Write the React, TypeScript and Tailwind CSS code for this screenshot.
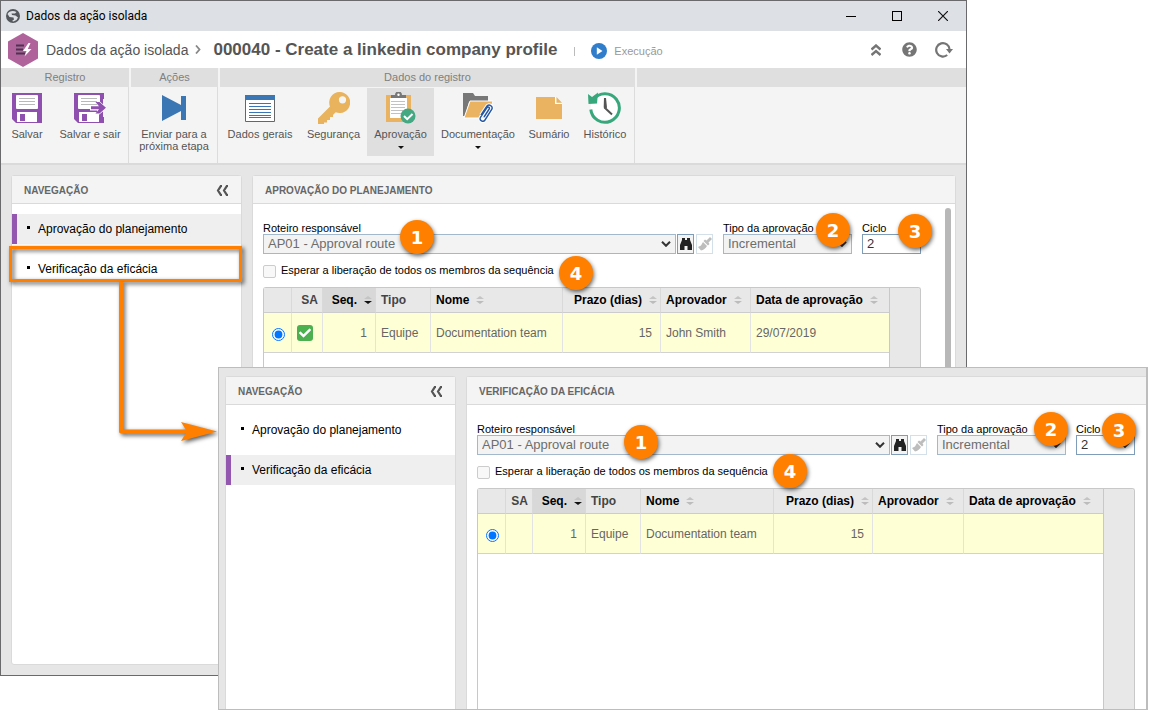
import type { ReactNode } from "react";
import clsx from "clsx";
import { FaCheck, FaQuestionCircle } from "react-icons/fa";

/* ---------- Icons ---------- */

const SaveShape = () => (
  <>
    <path d="M0 0h30v30H4l-4-4z" fill="#8e4fae" />
    <path d="M5 2h20a1 1 0 0 1 1 1v12a1 1 0 0 1-1 1H5a1 1 0 0 1-1-1V3a1 1 0 0 1 1-1z" fill="#fff" />
    <path d="M7 5.500h16M7 8.500h16M7 11.500h16" stroke="#b9b9b9" />
    <path d="M5 19h20v10H5z" fill="#fff" />
    <path d="M8 21h5v7H8z" fill="#8e4fae" />
  </>
);

const SaveIcon = () => (
  <svg width="30" height="30" viewBox="0 0 30 30">
    <SaveShape />
  </svg>
);

const SaveExitIcon = () => (
  <svg width="32" height="30" viewBox="0 0 32 30">
    <SaveShape />
    <path d="M29 6v18h3V6z" fill="#f4f4f4" />
    <path d="M16 12h7V6l10 8.800-10 8.700v-6h-7z" fill="#fff" />
    <path d="M17 13.300h8l-3.500-4.300h4l6.500 5.800-6.500 5.700h-4l3.500-4.200h-8z" fill="#8e4fae" />
  </svg>
);

const NextStepIcon = () => (
  <svg width="24" height="26" viewBox="0 0 24 26">
    <path d="M0 0l19 10V1h5v24h-5v-9L0 26z" fill="#3a76b4" />
  </svg>
);

const GeneralDataIcon = () => (
  <svg width="30" height="27" viewBox="0 0 30 27">
    <path d="M.5.5h29v26H.5z" fill="#fff" stroke="#666" />
    <path d="M0 0h30v5H0z" fill="#3a76b4" />
    <path d="M4 8.500h22M4 11.500h22M4 14.500h22M4 17.500h22M4 20.500h22M4 22.500h22" stroke="#3a76b4" />
  </svg>
);

const KeyIcon = () => (
  <svg width="32" height="32" viewBox="0 0 32 32">
    <path
      fillRule="evenodd"
      fill="#e9b25c"
      d="M21.500 0a10.500 10.500 0 1 1-3.800 20.200L15 23v2h-3v3H9v2.500H6V32H0v-5.500l12-12A10.500 10.500 0 0 1 21.500 0zm3 4.200a3.600 3.600 0 1 0 0 7.200 3.600 3.600 0 0 0 0-7.200z"
    />
  </svg>
);

const ApprovalIcon = () => (
  <svg width="30" height="32" viewBox="0 0 30 32">
    <path d="M0 3h25v27H0z" fill="#e9b361" />
    <path d="M4 6h17v20H4z" fill="#fff" />
    <path d="M5 9.500h14M5 12.500h14M5 15.500h14M5 18.500h12M5 21.500h10" stroke="#c2c2c2" />
    <path d="M5 6V3h4a3.500 3.500 0 0 1 7 0h4v3z" fill="#777" />
    <circle cx="12.500" cy="2.800" r="1.200" fill="#fff" />
    <circle cx="22" cy="24" r="7.500" fill="#44a882" />
    <path d="M18 24l3.200 3.200L26.500 22" stroke="#fff" strokeWidth="2" fill="none" />
  </svg>
);

const DocumentsIcon = () => (
  <svg width="31" height="30" viewBox="0 0 31 30">
    <path d="M0 0h10l2 3h13v6H6L2 23H0z" fill="#777" />
    <path d="M7 8h23l-5 17H1z" fill="#e9b361" stroke="#fff" />
    <path
      d="M18 22l6-9a3 3 0 0 1 5 3l-7 11a2.600 2.600 0 0 1-4.500-2.600l6.500-9.800a1.300 1.300 0 0 1 2.200 1.400L21 24"
      fill="none"
      stroke="#fff"
      strokeWidth="3.500"
    />
    <path
      d="M18 22l6-9a3 3 0 0 1 5 3l-7 11a2.600 2.600 0 0 1-4.500-2.600l6.500-9.800a1.300 1.300 0 0 1 2.200 1.400L21 24"
      fill="none"
      stroke="#2458a4"
      strokeWidth="1.400"
    />
  </svg>
);

const SummaryIcon = () => (
  <svg width="26" height="22" viewBox="0 0 26 22">
    <path d="M0 0h19v7h7v15H0zM20.500 0L26 5.700h-5.500z" fill="#e9b361" />
    <path d="M19.500 0v6.500H26" stroke="#fff" fill="none" />
  </svg>
);

const HistoryIcon = () => (
  <svg width="34" height="32" viewBox="0 0 34 32">
    <circle cx="17" cy="16" r="14.500" fill="#fff" />
    <path d="M5.500 7.500A14.300 14.300 0 1 1 2.800 17.500" fill="none" stroke="#38a77c" strokeWidth="3" />
    <path d="M0 2l4 3 6-4.500-1 11L.5 12z" fill="#38a77c" />
    <path d="M16 6h2l1 9.500-1.500 1.500-1.800-1.500z" fill="#555" />
    <path d="M16.500 15.500l7.500 7" stroke="#555" strokeWidth="2" />
  </svg>
);

const ModuleIcon = () => (
  <svg width="30" height="34" viewBox="0 0 30 34" className="shrink-0">
    <path d="M15 0l15 8.500v17L15 34 0 25.500v-17z" fill="#b0639b" />
    <path d="M8 12.500h8M8 16.500h7M8 20.500h9" stroke="#4b3450" strokeWidth="1.800" />
    <path d="M20.500 10l-5.500 8h3.500l-2 5.500 7-7.500h-3.700l2.700-6z" fill="#fff" />
  </svg>
);

const GlobeIcon = () => (
  <svg width="14" height="14" viewBox="0 0 14 14">
    <circle cx="7" cy="7" r="7" fill="#54575c" />
    <path
      d="M1.500 5C3 2 7 1 10.500 3L9 4.500 5.500 4.500 6 6l3.500.5L12 8.500 10.500 11l-3 1.500L6 12l2-1.500L7.500 8.500 3.500 8z"
      fill="#dde1e6"
    />
  </svg>
);

const ReloadIcon = () => (
  <svg width="18" height="16" viewBox="0 0 18 16" fill="none">
    <path d="M12.200 13A6.700 6.700 0 1 1 14.600 7.500" stroke="#757575" strokeWidth="2.200" />
    <path d="M11 7h7l-3.500 4.500z" fill="#757575" />
  </svg>
);

const ChevronsUpIcon = () => (
  <svg width="10" height="12" viewBox="0 0 10 12" fill="none" stroke="#757575" strokeWidth="2.400">
    <path d="M.5 5.500L5 1.500l4.500 4M.5 11L5 7l4.500 4" />
  </svg>
);

const ChevronsLeftIcon = () => (
  <svg width="13" height="11" viewBox="0 0 13 11" fill="none" stroke="#555" strokeWidth="2.200">
    <path d="M6 .8H5L2 5.500l3 4.700h1M12 .8h-1L8 5.500l3 4.700h1" />
  </svg>
);

const BinocularsIcon = () => (
  <svg width="12" height="12" viewBox="0 0 12 12" fill="#222">
    <path d="M2 0h3v2h2V0h3v2l2 5v5H7.500V8h-3v4H0V7l2-5z" />
  </svg>
);

const BrushIcon = () => (
  <svg width="14" height="14" viewBox="0 0 14 14" fill="#bdbdbd">
    <path d="M12 0l2 2-3.500 3.500 1 1.500-1.500 1.500L5.500 4 7 2.500 8.500 3.500z" />
    <path d="M5 5l4 4c-1.500 2.500-3.500 4-6 4.500L0 10l3-1.500z" />
  </svg>
);

const SortIcon = ({ active }: { active?: boolean }) => (
  <svg width="8" height="8" viewBox="0 0 8 8" className="shrink-0">
    <path d="M0 3L4 0l4 3z" fill="#c4c4c4" />
    <path d="M0 5h8L4 8z" fill={active ? "#111" : "#bcbcbc"} />
  </svg>
);

/* ---------- Ribbon ---------- */

interface RibbonItemProps {
  label: ReactNode;
  icon: ReactNode;
  width: string;
  active?: boolean;
  menu?: boolean;
}

const RibbonItem = ({ label, icon, width, active, menu }: RibbonItemProps) => (
  <button
    type="button"
    className={clsx("flex h-[68px] shrink-0 flex-col items-center pt-[3px]", width, active && "bg-[#dfdfdf]")}
  >
    <span className="flex h-[34px] items-center justify-center">{icon}</span>
    <span className="mt-[3px] text-[11px] leading-[12px] whitespace-nowrap text-[#555]">{label}</span>
    {menu && (
      <svg width="6" height="3" viewBox="0 0 6 3" className="mt-[6px]">
        <path d="M0 0h6L3 3z" fill="#111" />
      </svg>
    )}
  </button>
);

const RibbonGroup = ({ title, className, children }: { title: string; className: string; children: ReactNode }) => (
  <section className={clsx("flex shrink-0 flex-col", className)}>
    <h3 className="mr-[2px] h-[19px] bg-[#dfdfdf] text-center text-[11px] leading-[19px] text-[#808080]">{title}</h3>
    <div className="mr-[2px] flex flex-1 border-r border-[#dcdcdc] pt-px">{children}</div>
  </section>
);

/* ---------- Panels ---------- */

const NavPanel = ({ selected, className }: { selected: number; className?: string }) => {
  const items = ["Aprovação do planejamento", "Verificação da eficácia"];
  return (
    <nav className={clsx("flex w-[231px] shrink-0 flex-col rounded-t-[3px] border border-[#dadada] bg-white", className)}>
      <div className="flex h-[28px] items-center justify-between border-b border-[#dadada] bg-[#f4f4f4] pt-[2px] pr-[12px] pl-[12px]">
        <h2 className="text-[10px] font-bold text-[#666]">NAVEGAÇÃO</h2>
        <button type="button" aria-label="Recolher">
          <ChevronsLeftIcon />
        </button>
      </div>
      <ul className="flex flex-col gap-[10px] pt-[10px]">
        {items.map((item, i) => (
          <li key={item}>
            <a
              href="#"
              className={clsx(
                "flex h-[30px] items-center border-l-[5px] pl-[10px] text-[12px] text-black",
                i === selected ? "border-[#9457b0] bg-[#efefef]" : "border-transparent"
              )}
            >
              <span className="mr-[8px] mb-[3px] size-[3px] bg-black" />
              {item}
            </a>
          </li>
        ))}
      </ul>
    </nav>
  );
};

const Badge = ({ n, className }: { n: number; className: string }) => (
  <span
    className={clsx(
      "absolute z-10 flex size-[34px] items-center justify-center rounded-full bg-[#ff8000] font-['DejaVu_Sans',sans-serif] text-[18px] font-bold text-white shadow-[1px_2px_4px_rgba(0,0,0,0.6)]",
      className
    )}
  >
    {n}
  </span>
);

interface SelectFieldProps {
  id: string;
  label: string;
  value: string;
  disabled?: boolean;
  className?: string;
  children?: ReactNode;
}

const SelectField = ({ id, label, value, disabled, className, children }: SelectFieldProps) => (
  <div className={clsx("relative", className)}>
    <label htmlFor={id} className="block h-[12px] text-[11px] leading-[12px] whitespace-nowrap text-black">
      {label}
    </label>
    <div className="relative">
      <select
        id={id}
        disabled={disabled}
        className={clsx(
          "block h-[20px] w-full appearance-none border pl-[4px] text-[13px] leading-[18px] opacity-100",
          disabled ? "border-[#a4b8cc] bg-[#f3f3f3] text-[#6d6d6d]" : "border-[#7f9db9] bg-white text-[#333]"
        )}
      >
        <option>{value}</option>
      </select>
      <svg width="10" height="6" viewBox="0 0 10 6" className="pointer-events-none absolute top-[7px] right-[5px]">
        <path d="M1 .8L5 4.800l4-4" fill="none" stroke="#333" strokeWidth="2" />
      </svg>
    </div>
    {children}
  </div>
);

interface Row {
  approved: boolean;
  seq: number;
  type: string;
  name: string;
  term: number;
  approver: string;
  date: string;
}

interface Column {
  label: string;
  width: string;
  sort?: "idle" | "active";
  right?: boolean;
  center?: boolean;
}

interface ApprovalPanelProps {
  id: string;
  title: string;
  row: Row;
  columns: Column[];
  badges: string[];
  scroll?: boolean;
  className?: string;
}

const ApprovalPanel = ({ id, title, row, columns, badges, scroll, className }: ApprovalPanelProps) => {
  const cell = "h-[40px] border-r border-b border-r-[#e3e3e3] border-b-[#d2d2d2] p-0 pl-[5px] whitespace-nowrap";
  return (
    <section className={clsx("flex min-w-0 flex-1 flex-col rounded-t-[3px] border border-[#dadada] bg-white", className)}>
      <h2 className="flex h-[28px] shrink-0 items-center border-b border-[#dadada] bg-[#f4f4f4] pt-[2px] pl-[12px] text-[10px] font-bold text-[#666]">
        {title}
      </h2>
      <div className="flex min-h-0 flex-1">
        <form className={clsx("flex min-w-0 flex-1 flex-col pt-[18px] pl-[10px]", scroll ? "pr-[24px]" : "pr-[11px]")}>
          <div className="flex items-end">
            <SelectField id={`${id}-route`} label="Roteiro responsável" value="AP01 - Approval route" disabled className="flex-1">
              <Badge n={1} className={badges[0]} />
            </SelectField>
            <button
              type="button"
              aria-label="Pesquisar"
              className="ml-px flex h-[20px] w-[17px] items-center justify-center border border-[#7f9db9] bg-[#f3f3f3]"
            >
              <BinocularsIcon />
            </button>
            <button
              type="button"
              aria-label="Limpar"
              className="mr-[10px] ml-[2px] flex h-[20px] w-[17px] items-center justify-center border border-[#d3dfe9]"
            >
              <BrushIcon />
            </button>
            <SelectField id={`${id}-type`} label="Tipo da aprovação" value="Incremental" disabled className="w-[129px]">
              <Badge n={2} className={badges[1]} />
            </SelectField>
            <SelectField id={`${id}-cycle`} label="Ciclo" value="2" className="ml-[10px] w-[59px]">
              <Badge n={3} className={badges[2]} />
            </SelectField>
          </div>

          <div className="relative mt-[11px] flex h-[13px] items-center">
            <input
              id={`${id}-wait`}
              type="checkbox"
              disabled
              className="size-[13px] appearance-none rounded-[2px] border border-[#ccc] bg-[#f8f8f8]"
            />
            <label htmlFor={`${id}-wait`} className="pb-[2px] pl-[5px] text-[11px] leading-[13px] text-black">
              Esperar a liberação de todos os membros da sequência
            </label>
            <Badge n={4} className={badges[3]} />
          </div>

          <div className="mt-[9px] flex min-h-0 flex-1 rounded-t-[3px] border border-b-0 border-[#c8c8c8]">
            <div className="min-w-0 flex-1">
              <table className="w-full table-fixed border-separate border-spacing-0 text-[12px] leading-[16px]">
                <thead>
                  <tr>
                    {columns.map((col, i) => (
                      <th
                        key={i}
                        className={clsx(
                          "h-[25px] border-b border-b-[#cccccc] p-0 whitespace-nowrap",
                          i < columns.length - 1 && "border-r border-r-[#d9d9d9]",
                          col.width,
                          col.sort === "active" ? "bg-[#d8d8d8]" : "bg-[#e8e8e8]",
                          col.sort ? "text-black" : "text-[#444]"
                        )}
                      >
                        <span
                          className={clsx(
                            "flex items-center gap-[7px]",
                            col.right && "justify-end pr-[3px]",
                            col.center && "justify-end pr-[4px]",
                            !col.right && !col.center && "pl-[5px]"
                          )}
                        >
                          {col.label}
                          {col.sort && <SortIcon active={col.sort === "active"} />}
                        </span>
                      </th>
                    ))}
                  </tr>
                </thead>
                <tbody>
                  <tr className="bg-[#ffffd5] text-[#666]">
                    <td className="h-[40px] border-r border-b border-r-[#e3e3e3] border-b-[#d2d2d2] p-0 pl-[8px]">
                      <input
                        type="radio"
                        name={`${id}-row`}
                        aria-label={row.name}
                        defaultChecked
                        className="mt-[3px] block size-[13px]"
                      />
                    </td>
                    <td className={cell}>
                      {row.approved && (
                        <span className="flex size-[16px] items-center justify-center rounded-[3px] bg-[#4caf50] text-white">
                          <FaCheck size={12} />
                        </span>
                      )}
                    </td>
                    <td className={clsx(cell, "pr-[8px] text-right")}>{row.seq}</td>
                    <td className={cell}>{row.type}</td>
                    <td className={cell}>{row.name}</td>
                    <td className={clsx(cell, "pr-[8px] text-right")}>{row.term}</td>
                    <td className={cell}>{row.approver}</td>
                    <td className="h-[40px] border-b border-[#d2d2d2] p-0 pl-[5px] whitespace-nowrap">{row.date}</td>
                  </tr>
                </tbody>
              </table>
            </div>
            <div className="w-[31px] shrink-0 rounded-tr-[2px] border-l border-[#c8c8c8] bg-[#e8e8e8]" />
          </div>
        </form>
        {scroll && <div className="mt-[4px] mr-[4px] w-[6px] shrink-0 rounded-full bg-[#b8b8b8]" />}
      </div>
    </section>
  );
};

/* ---------- Data ---------- */

const planningColumns: Column[] = [
  { label: "", width: "w-[28px]" },
  { label: "SA", width: "w-[31px]", center: true },
  { label: "Seq.", width: "w-[53px]", sort: "active", right: true },
  { label: "Tipo", width: "w-[55px]" },
  { label: "Nome", width: "w-[132px]", sort: "idle" },
  { label: "Prazo (dias)", width: "w-[98px]", sort: "idle", right: true },
  { label: "Aprovador", width: "w-[90px]", sort: "idle" },
  { label: "Data de aprovação", width: "w-auto", sort: "idle" },
];

const efficacyColumns: Column[] = [
  { label: "", width: "w-[28px]" },
  { label: "SA", width: "w-[27px]", center: true },
  { label: "Seq.", width: "w-[53px]", sort: "active", right: true },
  { label: "Tipo", width: "w-[55px]" },
  { label: "Nome", width: "w-[133px]", sort: "idle" },
  { label: "Prazo (dias)", width: "w-[99px]", sort: "idle", right: true },
  { label: "Aprovador", width: "w-[91px]", sort: "idle" },
  { label: "Data de aprovação", width: "w-auto", sort: "idle" },
];

const baseRow = { seq: 1, type: "Equipe", name: "Documentation team", term: 15 };

export default function App() {
  return (
    <div className="relative h-screen min-h-[600px] overflow-hidden bg-white font-['Liberation_Sans',Arial,sans-serif]">
      {/* Main window */}
      <main className="mr-[182px] flex h-[calc(100%-38px)] flex-col border border-[#6a6a6c] bg-[#e6e6e6]">
        <div className="flex h-[30px] shrink-0 items-center bg-[#dde1e6] pl-[5px]">
          <GlobeIcon />
          <span className="ml-[6px] font-['Roboto','Open_Sans',sans-serif] text-[12px] text-black">
            Dados da ação isolada
          </span>
          <div className="ml-auto flex">
            <button type="button" aria-label="Minimizar" className="flex h-[30px] w-[46px] items-center justify-center">
              <span className="h-px w-[10px] bg-black" />
            </button>
            <button type="button" aria-label="Maximizar" className="flex h-[30px] w-[46px] items-center justify-center">
              <span className="size-[10px] border border-black" />
            </button>
            <button type="button" aria-label="Fechar" className="flex h-[30px] w-[46px] items-center justify-center">
              <svg width="10" height="10" viewBox="0 0 10 10" stroke="#111" strokeWidth="1.200">
                <path d="M0 0l10 10M10 0L0 10" />
              </svg>
            </button>
          </div>
        </div>

        <header className="flex h-[37px] shrink-0 items-center bg-white pr-[13px] pl-[7px]">
          <ModuleIcon />
          <span className="ml-[8px] pt-[2px] text-[14px] whitespace-nowrap text-[#555]">Dados da ação isolada</span>
          <svg width="6" height="9" viewBox="0 0 6 9" className="ml-[7px] shrink-0">
            <path d="M1 .5l3.500 4-3.500 4" fill="none" stroke="#888" strokeWidth="1.800" />
          </svg>
          <h1 className="ml-[12px] text-[17px] font-bold whitespace-nowrap text-[#555]">
            000040 - Create a linkedin company profile
          </h1>
          <span className="mt-[4px] ml-[17px] h-[9px] w-px bg-[#bbb]" />
          <svg width="16" height="16" viewBox="0 0 16 16" className="mt-[3px] ml-[16px] shrink-0">
            <circle cx="8" cy="8" r="8" fill="#2f7dcb" />
            <path d="M5.800 4.200v7.600L11.500 8z" fill="#fff" />
          </svg>
          <span className="ml-[7px] pt-[3px] text-[11px] text-[#999]">Execução</span>
          <div className="ml-auto flex items-center">
            <button type="button" aria-label="Recolher menu" className="mr-[21px]">
              <ChevronsUpIcon />
            </button>
            <button type="button" aria-label="Ajuda" className="mr-[18px] text-[#757575]">
              <FaQuestionCircle size={15} />
            </button>
            <button type="button" aria-label="Atualizar">
              <ReloadIcon />
            </button>
          </div>
        </header>

        <div className="flex h-[97px] shrink-0 border-b-2 border-[#dadada] bg-[#f4f4f4]">
          <RibbonGroup title="Registro" className="w-[130px]">
            <RibbonItem label="Salvar" icon={<SaveIcon />} width="w-[52px]" />
            <RibbonItem label="Salvar e sair" icon={<SaveExitIcon />} width="w-[74px]" />
          </RibbonGroup>
          <RibbonGroup title="Ações" className="w-[89px]">
            <RibbonItem
              label={
                <>
                  Enviar para a
                  <br />
                  próxima etapa
                </>
              }
              icon={<NextStepIcon />}
              width="w-[86px]"
            />
          </RibbonGroup>
          <RibbonGroup title="Dados do registro" className="w-[417px]">
            <RibbonItem label="Dados gerais" icon={<GeneralDataIcon />} width="w-[80px]" />
            <RibbonItem label="Segurança" icon={<KeyIcon />} width="w-[67px]" />
            <RibbonItem label="Aprovação" icon={<ApprovalIcon />} width="w-[67px]" active menu />
            <RibbonItem label="Documentação" icon={<DocumentsIcon />} width="w-[88px]" menu />
            <RibbonItem label="Sumário" icon={<SummaryIcon />} width="w-[54px]" />
            <RibbonItem label="Histórico" icon={<HistoryIcon />} width="w-[58px]" />
          </RibbonGroup>
          <div className="h-[19px] flex-1 bg-[#dfdfdf]" />
        </div>

        <div className="flex min-h-0 flex-1 gap-[10px] p-[10px]">
          <NavPanel selected={0} className="rounded-b-[3px]" />
          <ApprovalPanel
            id="planning"
            title="APROVAÇÃO DO PLANEJAMENTO"
            columns={planningColumns}
            row={{ ...baseRow, approved: true, approver: "John Smith", date: "29/07/2019" }}
            badges={["left-[137px] -top-[2px]", "left-[93px] -top-[9px]", "left-[36px] -top-[8px]", "left-[296px] -top-[9px]"]}
            scroll
          />
        </div>
      </main>

      {/* Callout linking the menu entry to the second window */}
      <div className="pointer-events-none absolute top-[246px] left-[9px] h-[36px] w-[233px] border-[3px] border-[#ff8000] drop-shadow-[2px_2px_2px_rgba(0,0,0,0.65)]" />
      <svg
        width="100"
        height="162"
        viewBox="0 0 100 162"
        className="pointer-events-none absolute top-[282px] left-[118px] drop-shadow-[2px_2px_2px_rgba(0,0,0,0.65)]"
      >
        <path d="M3 0v149.500h72" fill="none" stroke="#ff8000" strokeWidth="4" strokeLinejoin="round" />
        <path d="M63 140l36 9.500L63 159l6-9.500z" fill="#ff8000" />
      </svg>

      {/* Second window */}
      <div className="absolute top-[367px] right-px bottom-[4px] left-[218px] flex gap-[10px] border border-r-2 border-[#bdbdbd] bg-[#e6e6e6] pt-[8px] pl-[6px]">
        <NavPanel selected={1} className="border-b-0" />
        <ApprovalPanel
          id="efficacy"
          title="VERIFICAÇÃO DA EFICÁCIA"
          columns={efficacyColumns}
          row={{ ...baseRow, approved: false, approver: "", date: "" }}
          badges={["left-[147px] top-[2px]", "left-[97px] -top-[11px]", "left-[26px] -top-[10px]", "left-[296px] -top-[12px]"]}
          className="rounded-tr-none border-r-0 border-b-0"
        />
      </div>
    </div>
  );
}
